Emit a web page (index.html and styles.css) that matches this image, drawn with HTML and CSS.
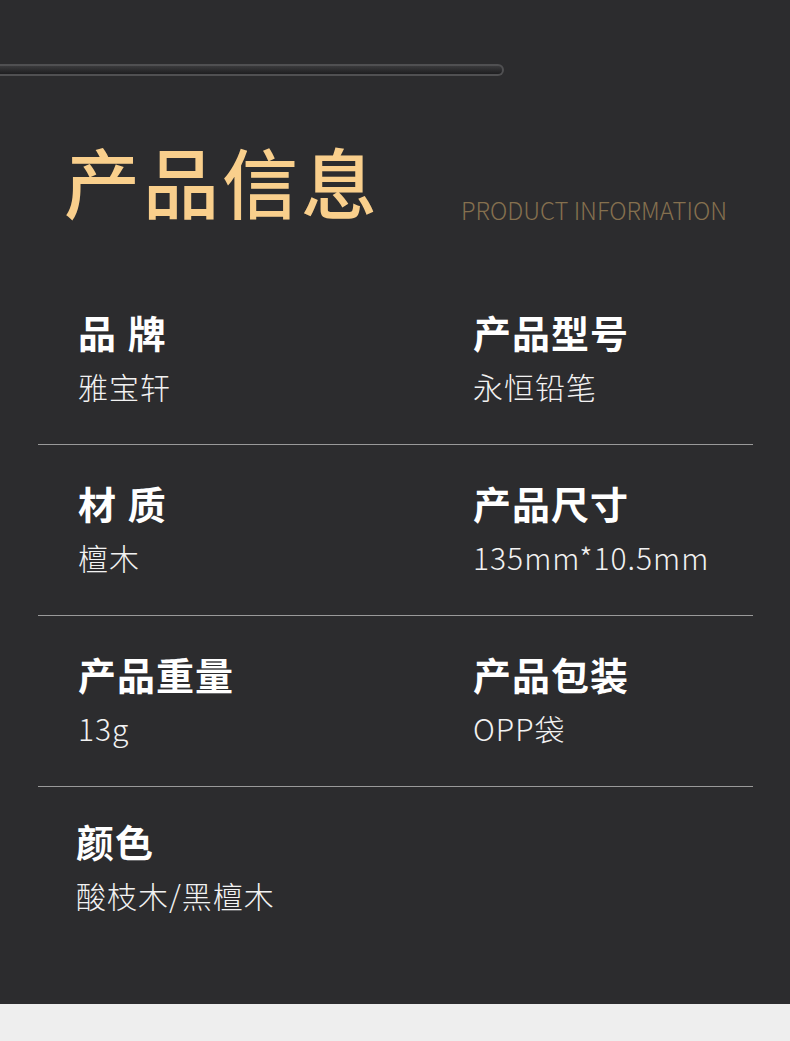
FILE: index.html
```html
<!DOCTYPE html>
<html lang="zh-CN">
<head>
<meta charset="utf-8">
<title>产品信息</title>
<link rel="stylesheet" href="styles.css">
</head>
<body>
<div class="page">
  <div class="bar"></div>
  <header class="header">
    <h1 class="title">产品信息</h1>
    <div class="subtitle">PRODUCT INFORMATION</div>
  </header>
  <section class="table">
    <div class="row">
      <div class="cell"><div class="label">品 牌</div><div class="value">雅宝轩</div></div>
      <div class="cell"><div class="label">产品型号</div><div class="value">永恒铅笔</div></div>
    </div>
    <div class="row">
      <div class="cell"><div class="label">材 质</div><div class="value">檀木</div></div>
      <div class="cell"><div class="label">产品尺寸</div><div class="value">135mm*10.5mm</div></div>
    </div>
    <div class="row">
      <div class="cell"><div class="label">产品重量</div><div class="value">13g</div></div>
      <div class="cell"><div class="label">产品包装</div><div class="value">OPP袋</div></div>
    </div>
    <div class="row row-last">
      <div class="cell"><div class="label">颜色</div><div class="value">酸枝木/黑檀木</div></div>
    </div>
  </section>
</div>
</body>
</html>
```

FILE: styles.css
```css
html, body {
  margin: 0;
  padding: 0;
}
body {
  background: #eeeeee;
  font-family: "Noto Sans CJK SC", "Noto Sans", sans-serif;
}
.page {
  background: #2c2c2e;
  height: 1004px;
  overflow: hidden;
  padding-top: 64px;
  box-sizing: border-box;
}
.bar {
  width: 504px;
  height: 12px;
  box-sizing: border-box;
  border: 2px solid #505052;
  border-left: none;
  border-radius: 0 6px 6px 0;
  background: linear-gradient(#3a3a3c, #1e1e20);
}
.header {
  display: flex;
  align-items: flex-end;
  margin-top: 66px;
  padding-left: 64px;
}
.title {
  margin: 0;
  font-size: 76px;
  line-height: 76px;
  font-weight: 500;
  letter-spacing: 3px;
  color: #f9cf8c;
  width: 397px;
}
.subtitle {
  font-size: 23.8px;
  line-height: 25px;
  font-weight: 300;
  color: #85704f;
  margin-bottom: -4px;
  letter-spacing: 0;
}
.table {
  margin: 56px 37px 0 38px;
}
.row {
  display: grid;
  grid-template-columns: 395px 1fr;
  padding: 36px 0 38px 40px;
  border-bottom: 1px solid #9a9a9a;
}
.row-last {
  border-bottom: none;
  padding-top: 32px;
  padding-left: 38px;
}
.label {
  font-size: 38px;
  line-height: 44px;
  font-weight: 700;
  color: #ffffff;
  letter-spacing: 1px;
  word-spacing: 1px;
}
.value {
  margin-top: 12px;
  font-size: 30px;
  line-height: 40px;
  font-weight: 300;
  color: #f2f2f2;
  letter-spacing: 1px;
}
```
